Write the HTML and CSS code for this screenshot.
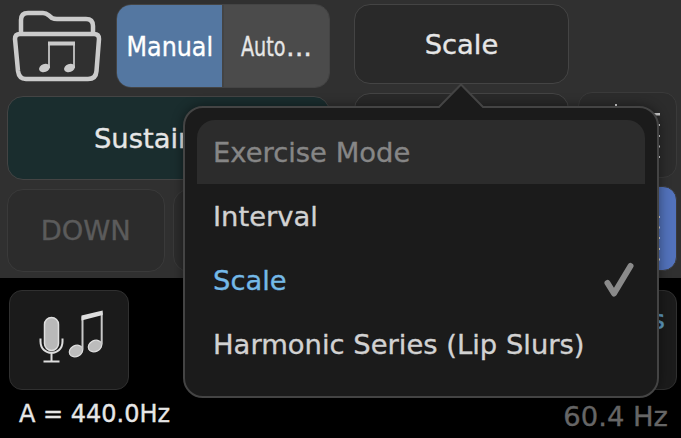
FILE: index.html
```html
<!DOCTYPE html>
<html lang="en">
<head>
    <meta charset="UTF-8">
    <meta name="viewport" content="width=device-width, initial-scale=1.0">
    <title>Exercise Mode</title>
    <link rel="stylesheet" href="styles.css">
</head>
<body>

    <div class="app">
        <div class="controls">
            <div class="left-col">
                <div class="row top-row">
                    <svg class="folder" width="108" height="82" viewBox="0 5 108 82" fill="none" stroke="#cbcbcb" stroke-width="4.500">
                        <path d="M21 33V20Q21 13 28 13H43Q46 13 49 15.500L52 18Q54 19 57 19H86Q93 19 93 26V33"/>
                        <path d="M20 34H94Q99 34 99 39L96.500 71Q96 79 88 79H26Q19 79 18 71L15 39Q15 34 20 34Z"/>
                        <path d="M48 43.500H75" stroke-width="4"/>
                        <path d="M49 42V68M74 42V68" stroke-width="1.700"/>
                        <g fill="#cbcbcb" stroke="none">
                            <ellipse cx="44.500" cy="68" rx="5.600" ry="4" transform="rotate(-20 44.500 68)"/>
                            <ellipse cx="69.500" cy="68" rx="5.600" ry="4" transform="rotate(-20 69.500 68)"/>
                        </g>
                    </svg>
                    <div class="segmented">
                        <button class="seg active"><span class="manual">Manual</span></button>
                        <button class="seg"><span class="auto"><span class="narrow">Auto</span>...</span></button>
                    </div>
                </div>
                <button class="btn sustain">Sustain On</button>
                <div class="row">
                    <button class="btn dim">DOWN</button>
                    <button class="btn dim">UP</button>
                </div>
            </div>
            <div class="mid-col">
                <button class="btn">Scale</button>
                <button class="btn"></button>
            </div>
            <div class="right-col">
                <button class="btn list-btn">
                    <svg width="97" height="84" viewBox="579 93 97 84" fill="#d4d4d4">
                        <path d="M615 104h2v3h-2zM650 113h10v2.500H650zM650 124h10v2H650zM650 135h10v2H650zM650 145.500h10v2H650zM650 156h10v2H650z"/>
                    </svg>
                </button>
                <button class="btn list-btn blue">
                    <svg width="97" height="83" viewBox="579 188 97 83" fill="#d4d4d4">
                        <path d="M650 217h10v2H650zM650 227.500h10v2H650zM650 238h10v2H650zM650 249h10v2H650zM650 259.500h10v2H650z"/>
                    </svg>
                </button>
            </div>
        </div>

        <div class="footer">
            <div class="footer-buttons">
                <button class="btn tuner">
                    <svg width="115" height="95" viewBox="11.500 292.500 115 95">
                        <!-- microphone -->
                        <rect x="44" y="317" width="14" height="33" rx="7" fill="#b9b9b9" stroke="#dedede" stroke-width="1.500"/>
                        <path d="M40 338V341C40 356 62 356 62 341V338M51 352V361M43 361H59" fill="none" stroke="#dedede" stroke-width="2"/>
                        <!-- beamed notes -->
                        <g fill="#bcbcbc" stroke="#dedede" stroke-width="1.200">
                            <ellipse cx="75.500" cy="350.500" rx="7" ry="5.500" transform="rotate(-27 75.500 350.500)"/>
                            <ellipse cx="94.500" cy="345.500" rx="7" ry="5.500" transform="rotate(-27 94.500 345.500)"/>
                        </g>
                        <path d="M82 349V316M101.200 344V312" stroke="#c8c8c8" stroke-width="2"/>
                        <path d="M81 315L102.200 310V314.500L81 320Z" fill="#dedede"/>
                    </svg>
                </button>
                <button class="btn notes">Notes</button>
            </div>
            <div class="status">
                <span class="pitch">A = 440.0Hz</span>
                <span class="freq">60.4 Hz</span>
            </div>
        </div>
    </div>

    <div class="popover">
        <svg class="arrow" width="48" height="26" viewBox="0 0 48 26">
            <path d="M1 26V25L2.500 24L24 1.500L45.500 24L47 25V26Z" fill="#1b1b1b"/>
            <path d="M0 24H2L24 1.500L46 24H48" fill="none" stroke="#444" stroke-width="2"/>
        </svg>
        <div class="popover-title">Exercise Mode</div>
        <div class="option">Interval</div>
        <div class="option selected">
            Scale
            <svg width="32" height="38" viewBox="0 0 32 38" fill="none" stroke="#8a8a8a" stroke-width="6" stroke-linecap="round" stroke-linejoin="round">
                <path d="M4.500 22L11 32.500L27.500 5"/>
            </svg>
        </div>
        <div class="option">Harmonic Series (Lip Slurs)</div>
    </div>

</body>
</html>
```

FILE: styles.css
```css
* {
    box-sizing: border-box;
}

body {
    margin: 0;
    width: 681px;
    height: 438px;
    overflow: hidden;
    background: #000;
    color: #e6e6e6;
    font-family: "DejaVu Sans", sans-serif;
    font-size: 27.4px;
    -webkit-text-stroke: 0.35px;
}

button {
    padding: 0;
    border: none;
    font: inherit;
    color: inherit;
}

.controls {
    display: flex;
    height: 278px;
    padding: 5px 4px 0 7px;
    background: #303030;
}

.left-col {
    display: flex;
    flex-direction: column;
    gap: 9px;
    width: 323px;
}

.row {
    display: flex;
    gap: 8px;
    height: 82px;
}

.row .btn {
    height: 83px;
}

.top-row {
    gap: 0;
    margin-left: -7px;
}

.folder {
    flex: none;
    margin-right: 8px;
}

.btn {
    display: flex;
    align-items: center;
    justify-content: center;
    border: 1px solid #444;
    border-radius: 16px;
    background: #292929;
}

.segmented {
    display: flex;
    width: 215px;
    height: 84px;
    margin-top: -1px;
    border: 1px solid #444;
    border-radius: 15px;
    overflow: hidden;
}

.seg {
    flex: 1;
    display: flex;
    align-items: center;
    justify-content: center;
    background: #4b4b4b;
    padding-top: 1px;
}

.seg.active {
    flex: none;
    width: 107px;
    background: #5477a1;
    color: #fff;
    border-right: 2px solid #444;
}

.manual {
    transform: scaleX(0.87);
}

.auto {
    display: flex;
}

.narrow {
    width: 45px;
    transform: scaleX(0.7);
    transform-origin: left;
}

.sustain {
    height: 84px;
    background: #1a2d2e;
}

.dim {
    flex: 1;
    border-color: #3a3a3a;
    background: #2c2c2c;
    color: #5b5b5b;
}

.mid-col {
    display: flex;
    flex-direction: column;
    gap: 9px;
    width: 215px;
    margin: -1px 0 0 24px;
}

.mid-col .btn {
    height: 80px;
}

.right-col {
    display: flex;
    flex-direction: column;
    gap: 8px;
    width: 99px;
    margin: 87px 0 0 9px;
}

.list-btn {
    height: 86px;
    border-color: #3a3a3a;
    border-radius: 14px;
    background: #2c2c2c;
}

.list-btn svg {
    flex: none;
}

.list-btn.blue {
    height: 85px;
    background: #5272bb;
}

.footer {
    padding: 12px 4px 0 9px;
}

.footer-buttons {
    display: flex;
    justify-content: space-between;
}

.footer .btn {
    width: 120px;
    height: 100px;
    border: 1px solid #303030;
    border-radius: 13px;
    background: #1b1b1b;
}

.footer .notes {
    padding: 0 11px 42px 0;
    justify-content: flex-end;
    color: #5e9cc2;
}

.status {
    display: flex;
    align-items: center;
    justify-content: space-between;
    height: 48px;
    padding: 0 9px 0 10px;
}

.pitch {
    font-size: 24px;
}

.freq {
    margin-top: 5px;
    color: #666;
}

.popover {
    position: absolute;
    left: 183px;
    top: 106px;
    width: 476px;
    height: 292px;
    padding: 12px;
    border: 2px solid #444;
    border-radius: 20px;
    background: #1b1b1b;
    box-shadow: 0 0 12px rgba(0, 0, 0, 0.45);
    color: #d2d2d2;
}

.arrow {
    position: absolute;
    left: 252px;
    top: -25px;
}

.popover-title,
.option {
    display: flex;
    align-items: center;
    justify-content: space-between;
    height: 64px;
    padding: 0 10px 0 16px;
}

.popover-title {
    border-radius: 18px 18px 0 0;
    background: #2c2c2c;
    color: #868686;
}

.selected {
    color: #74b9e7;
}
```
